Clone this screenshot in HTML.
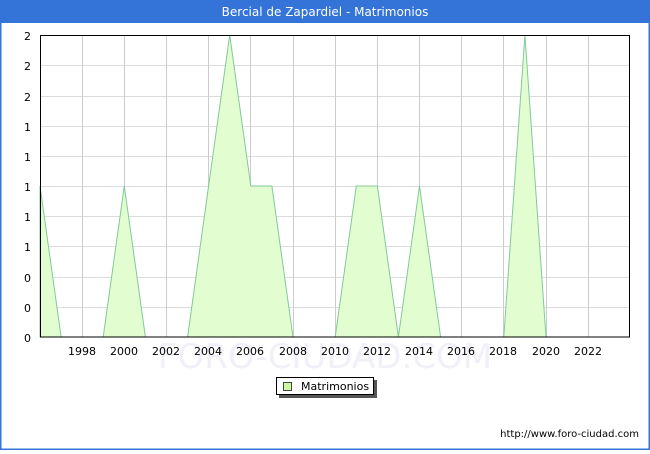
<!DOCTYPE html>
<html><head><meta charset="utf-8"><style>
html,body{margin:0;padding:0;background:#fff}
body{width:650px;height:450px;overflow:hidden;font-family:"DejaVu Sans","Liberation Sans",sans-serif}
</style></head><body>
<svg width="650" height="450" xmlns="http://www.w3.org/2000/svg" font-family="DejaVu Sans, Liberation Sans, sans-serif">
<rect x="0.5" y="0.5" width="649" height="449" fill="#fff" stroke="#3474d8" stroke-width="2"/>
<rect x="0" y="0" width="650" height="23" fill="#3474d8"/>
<text x="325" y="16" text-anchor="middle" fill="#fff" font-size="12">Bercial de Zapardiel - Matrimonios</text>
<g stroke="#dcdcdc" stroke-width="1">
<line x1="40" x2="630" y1="65.5" y2="65.5"/><line x1="40" x2="630" y1="96.5" y2="96.5"/><line x1="40" x2="630" y1="126.5" y2="126.5"/><line x1="40" x2="630" y1="156.5" y2="156.5"/><line x1="40" x2="630" y1="186.5" y2="186.5"/><line x1="40" x2="630" y1="216.5" y2="216.5"/><line x1="40" x2="630" y1="246.5" y2="246.5"/><line x1="40" x2="630" y1="277.5" y2="277.5"/><line x1="40" x2="630" y1="307.5" y2="307.5"/>
</g>
<g stroke="#cccccc" stroke-width="1">
<line x1="82.5" x2="82.5" y1="35" y2="337"/><line x1="124.5" x2="124.5" y1="35" y2="337"/><line x1="166.5" x2="166.5" y1="35" y2="337"/><line x1="208.5" x2="208.5" y1="35" y2="337"/><line x1="250.5" x2="250.5" y1="35" y2="337"/><line x1="293.5" x2="293.5" y1="35" y2="337"/><line x1="335.5" x2="335.5" y1="35" y2="337"/><line x1="377.5" x2="377.5" y1="35" y2="337"/><line x1="419.5" x2="419.5" y1="35" y2="337"/><line x1="461.5" x2="461.5" y1="35" y2="337"/><line x1="503.5" x2="503.5" y1="35" y2="337"/><line x1="546.5" x2="546.5" y1="35" y2="337"/><line x1="588.5" x2="588.5" y1="35" y2="337"/>
</g>
<text x="325" y="368" text-anchor="middle" fill="#f0f0f8" font-size="34">FORO-CIUDAD.COM</text>
<polygon fill="#e2fdcf" stroke="#82c99a" stroke-width="1" points="40,186 61.1,337 103.2,337 124.3,186 145.4,337 187.6,337 208.6,186 229.7,35 250.8,186 271.9,186 293,337 335.2,337 356.3,186 377.4,186 398.4,337 419.5,186 440.6,337 503.8,337 524.9,35 546,337 40,337"/>
<rect x="40.5" y="35.5" width="589" height="301.5" fill="none" stroke="#000" stroke-width="1"/>
<g font-size="11" fill="#000" text-anchor="end">
<text x="31" y="40">2</text><text x="31" y="70">2</text><text x="31" y="101">2</text><text x="31" y="131">1</text><text x="31" y="161">1</text><text x="31" y="191">1</text><text x="31" y="221">1</text><text x="31" y="251">1</text><text x="31" y="282">0</text><text x="31" y="312">0</text><text x="31" y="342">0</text>
</g>
<g font-size="11" fill="#000" text-anchor="middle">
<text x="82" y="355">1998</text><text x="124" y="355">2000</text><text x="166" y="355">2002</text><text x="208" y="355">2004</text><text x="250" y="355">2006</text><text x="293" y="355">2008</text><text x="335" y="355">2010</text><text x="377" y="355">2012</text><text x="419" y="355">2014</text><text x="461" y="355">2016</text><text x="503" y="355">2018</text><text x="546" y="355">2020</text><text x="588" y="355">2022</text>
</g>
<rect x="279" y="380" width="98" height="18" fill="#555"/>
<rect x="276.5" y="377.5" width="97" height="17" fill="#fff" stroke="#000"/>
<rect x="283.5" y="382.5" width="8" height="8" fill="#ccf7a0" stroke="#444"/>
<text x="301" y="390" font-size="11" fill="#000">Matrimonios</text>
<text x="639" y="437" text-anchor="end" font-size="10" fill="#000">http://www.foro-ciudad.com</text>
</svg>
</body></html>
